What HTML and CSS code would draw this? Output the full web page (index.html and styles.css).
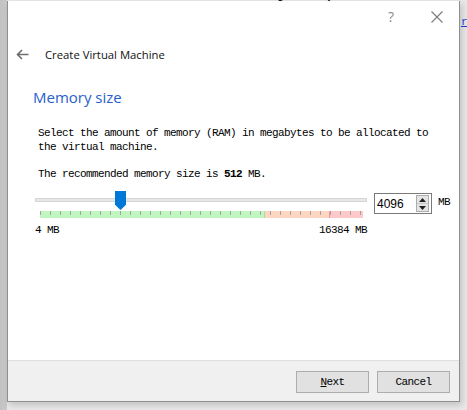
FILE: index.html
```html
<!DOCTYPE html>
<html>
<head>
<meta charset="utf-8">
<link rel="stylesheet" href="styles.css">
</head>
<body>
<div class="backdrop-text">Lesslet ths Isstlacs &amp; vilst to Lmglamt spslsvs Shaeus Ushe lssa Luvt aslt</div>
<a class="backdrop-link">rs</a>
<div class="dialog">
  <div class="titlebar">
    <span class="help">?</span>
    <svg class="close" width="12" height="12" viewBox="0 0 12 12"><path d="M0.5 0.5 L11.5 11.5 M11.5 0.5 L0.5 11.5" stroke="#7a7a7a" stroke-width="1.1" fill="none"/></svg>
  </div>
  <div class="header">
    <svg class="back" width="13" height="11" viewBox="0 0 13 11"><path d="M12.5 5.5 H1.5 M6 1 L1.5 5.5 L6 10" stroke="#6d6d6d" stroke-width="1.6" fill="none"/></svg>
    <span class="title">Create Virtual Machine</span>
  </div>
  <div class="content">
    <h1 class="heading">Memory size</h1>
    <p class="para">Select the amount of memory (RAM) in megabytes to be allocated to<br>the virtual machine.</p>
    <p class="para rec">The recommended memory size is <b>512</b> MB.</p>
    <div class="slider-row">
      <div class="slider">
        <div class="track-wrap">
          <div class="track"></div>
          <div class="handle"></div>
        </div>
        <div class="ticks"></div>
        <div class="labels"><span>4 MB</span><span>16384 MB</span></div>
      </div>
      <div class="spin">
        <span class="spin-val">4096</span>
        <div class="spin-btns">
          <div class="spin-btn"><svg width="7" height="4" viewBox="0 0 7 4"><path d="M0 4 L3.5 0 L7 4Z" fill="#222"/></svg></div>
          <div class="spin-btn"><svg width="7" height="4" viewBox="0 0 7 4"><path d="M0 0 L3.5 4 L7 0Z" fill="#222"/></svg></div>
        </div>
      </div>
      <span class="unit">MB</span>
    </div>
  </div>
  <div class="footer">
    <button class="btn"><u>N</u>ext</button>
    <button class="btn">Cancel</button>
  </div>
</div>
</body>
</html>
```
FILE: styles.css
```css
html, body {
  margin: 0;
  padding: 0;
}
body {
  width: 467px;
  height: 410px;
  overflow: hidden;
  position: relative;
  background: linear-gradient(to right, #c2c2c2 0, #cbcbcb 7px, #e9e9e9 7px);
  font-family: "Open Sans", "Noto Sans", sans-serif;
}
.backdrop-text {
  position: absolute;
  left: 32px;
  top: -12px;
  font-family: "Liberation Mono", monospace;
  font-size: 12px;
  font-weight: bold;
  color: #111;
  white-space: nowrap;
}
.backdrop-link {
  position: absolute;
  left: 461px;
  top: 16px;
  font-family: "Liberation Mono", monospace;
  font-size: 11px;
  color: #1a3fd8;
  text-decoration: underline;
}
.dialog {
  position: relative;
  margin: 1px 0 0 7px;
  width: 451px;
  height: 400px;
  background: #fff;
  border: 1px solid #8f8f8f;
  border-top: none;
  box-shadow: 2px 3px 7px rgba(0,0,0,0.18);
  display: flex;
  flex-direction: column;
}
.titlebar {
  height: 31px;
  display: flex;
  justify-content: flex-end;
  align-items: center;
  padding-right: 16px;
  gap: 37px;
  flex: none;
}
.help {
  font-family: "Open Sans", sans-serif;
  font-size: 14px;
  color: #8a8a8a;
  line-height: 14px;
}
.close { display: block; }
.header {
  height: 44px;
  display: flex;
  align-items: center;
  padding-left: 8px;
  flex: none;
}
.back { display: block; margin-right: 16px; margin-top: 1px; }
.title {
  font-size: 11.3px;
  color: #111;
  margin-top: 1px;
}
.content {
  flex: 1;
  padding-left: 25px;
}
.heading {
  margin: 11px 0 0 0;
  font-size: 15px;
  font-weight: normal;
  color: #2960cc;
  line-height: 20px;
}
.para {
  margin: 19px 0 0 5px;
  font-family: "Liberation Mono", monospace;
  font-size: 11px;
  letter-spacing: -0.6px;
  line-height: 14px;
  color: #000;
}
.rec { margin-top: 13px; }
.slider-row {
  display: flex;
  align-items: flex-start;
  margin-top: 10px;
  margin-left: 2px;
}
.slider {
  width: 332px;
  flex: none;
}
.track-wrap {
  position: relative;
  height: 20px;
}
.track {
  position: absolute;
  left: 0;
  right: 0;
  top: 7px;
  height: 2px;
  background: #e6e6e6;
  border: 1px solid #d6d6d6;
}
.handle {
  position: absolute;
  left: 80px;
  top: 0;
  width: 11px;
  height: 19px;
  background: #0078d7;
  clip-path: polygon(0 0, 100% 0, 100% 72%, 50% 100%, 0 72%);
}
.ticks {
  margin-left: 5px;
  width: 323px;
  height: 7px;
  background:
    repeating-linear-gradient(to right, #a2a2a2 0 1px, transparent 1px 10px) 0 0 / 100% 4px no-repeat,
    linear-gradient(to right, #c0f6c0 0 224px, #a8e0a0 224px 225px, #ffd6c2 225px 289px, #f39a9a 289px 290px, #ffc9c9 290px 100%);
}
.labels {
  display: flex;
  justify-content: space-between;
  margin-top: 5px;
  font-family: "Liberation Mono", monospace;
  font-size: 11px;
  letter-spacing: -0.6px;
  line-height: 14px;
  color: #000;
}
.spin {
  margin-left: 7px;
  margin-top: 2px;
  width: 52px;
  height: 19px;
  border: 1px solid #7a7a7a;
  display: flex;
  align-items: center;
  justify-content: space-between;
  padding: 0 2px 0 2px;
  box-sizing: content-box;
  background: #fff;
}
.spin-val {
  font-family: "Liberation Sans", Arial, sans-serif;
  font-size: 12px;
  color: #000;
}
.spin-btns {
  display: flex;
  flex-direction: column;
  width: 11px;
  height: 15px;
  border: 1px solid #adadad;
  background: #e5e5e5;
}
.spin-btn {
  flex: 1;
  display: flex;
  align-items: center;
  justify-content: center;
}
.spin-btn svg { display: block; }
.spin-btn + .spin-btn { border-top: 1px solid #c8c8c8; }
.unit {
  margin-left: 6px;
  margin-top: 5px;
  font-family: "Liberation Mono", monospace;
  font-size: 11px;
  letter-spacing: -0.6px;
  color: #000;
}
.footer {
  flex: none;
  background: #f0f0f0;
  border-top: 1px solid #dfdfdf;
  display: flex;
  justify-content: flex-end;
  align-items: flex-start;
  gap: 8px;
  padding: 10px 9px 0 0;
  box-sizing: border-box;
  height: 41px;
}
.btn {
  width: 73px;
  height: 22px;
  background: #e1e1e1;
  border: 1px solid #adadad;
  font-family: "Liberation Mono", monospace;
  font-size: 11px;
  letter-spacing: -0.6px;
  color: #000;
  padding: 0;
}
```
